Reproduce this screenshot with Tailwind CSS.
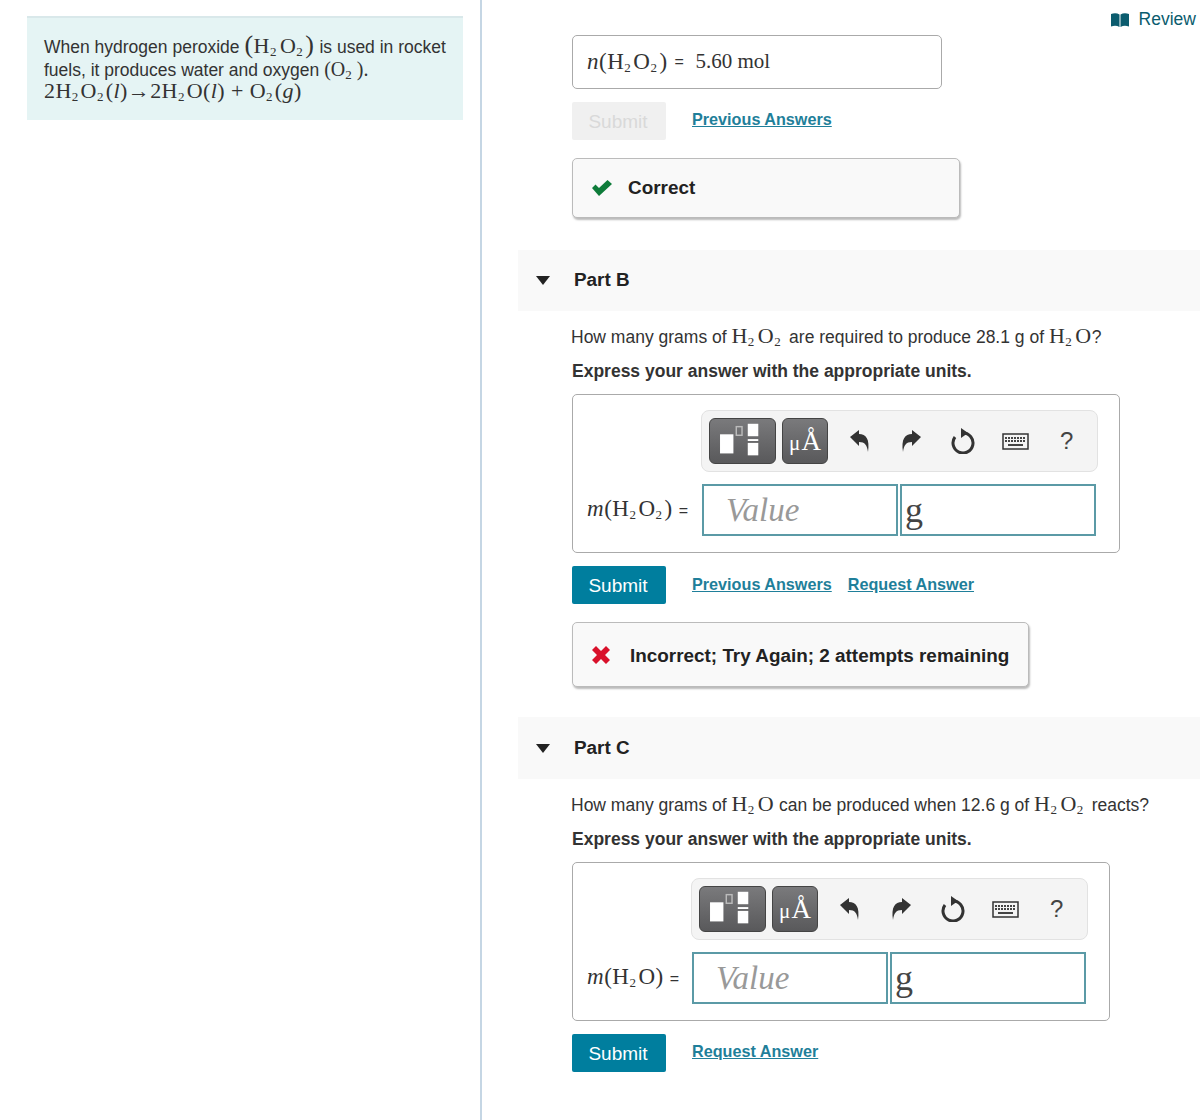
<!DOCTYPE html>
<html>
<head>
  <meta charset="UTF-8">
  <meta name="viewport" content="width=device-width, initial-scale=1.0">
  <script src="https://cdn.jsdelivr.net/npm/@tailwindcss/browser@4"></script>
</head>
<body class="bg-white font-['Liberation_Sans',sans-serif] text-[#333] overflow-hidden">
  <div class="flex w-[1200px] h-[1120px]">

    <!-- intro panel -->
    <div class="w-[482px] h-full shrink-0 border-r-2 border-[#c5d6e4] pt-4 pl-[27px]">
      <div class="w-[436px] h-[104px] bg-[#e5f4f4] border-t-2 border-[#d9e8ea] pt-[14px] pl-[17px] text-[17.500px] leading-[23px]">
        <p>When hydrogen peroxide <span class="font-['Liberation_Serif',serif] text-[22px] leading-none tracking-[0.5px]"><span class="text-[26px] font-light">(</span>H<sub class="text-[13px] mr-[3px]">2</sub>O<sub class="text-[13px] mr-[2px]">2</sub><span class="text-[26px] font-light">)</span></span> is used in rocket fuels, it produces water and oxygen <span class="font-['Liberation_Serif',serif] text-[20px] leading-none">(O<sub class="text-[13px]">2</sub> ).</span></p>
        <p class="-mt-px font-['Liberation_Serif',serif] text-[22px] leading-[20px] tracking-[0.4px]">2H<sub class="text-[13px] mr-[2px]">2</sub>O<sub class="text-[13px] mr-[2px]">2</sub>(<i>l</i>)→2H<sub class="text-[13px] mr-[2px]">2</sub>O(<i>l</i>) + O<sub class="text-[13px] mr-[2px]">2</sub>(<i>g</i>)</p>
      </div>
    </div>

    <!-- questions -->
    <div class="flex-1">
      <div class="h-[35px] flex items-start justify-end pt-[8px] pr-1 text-[17.500px] leading-[22px] text-[#0b5c6e]">
        <svg class="w-[18px] h-[14px] mt-[5px] mr-[10px]" viewBox="0 0 18 14" fill="#0b5c6e"><path d="M0 1c3-1 6-1 8.500.5V14c-2.500-1.500-5.500-1.500-8.500-.5zM9.500 1.500C12 0 15 0 18 1v12.500c-3-1-6-1-8.500.5z"/></svg>
        Review
      </div>

      <div class="pl-[90px]">
        <div class="w-[370px] h-[54px] border border-[#aaa] rounded-[5px] flex items-center pl-[14px] font-['Liberation_Serif',serif] text-[23px] tracking-[0.5px]">
          <span class="whitespace-nowrap"><i>n</i>(H<sub class="text-[13px] mr-[2px]">2</sub>O<sub class="text-[13px] mr-[2px]">2</sub>)</span>
          <span class="font-['Liberation_Sans',sans-serif] text-[16px] ml-[7px] mr-[11px]">=</span>
          <span class="text-[21px] tracking-normal">5.60 mol</span>
        </div>
        <div class="flex mt-[13px] items-start">
          <div class="w-[94px] h-[38px] bg-[#f0f0f0] rounded-[2px] flex items-center justify-center pt-[3px] pr-[2px] text-[19px] text-[#d9d9d9]">Submit</div>
          <a class="ml-[26px] mt-[6px] text-[16.200px] leading-[22px] font-bold text-[#1f7f9a] underline">Previous Answers</a>
        </div>
        <div class="w-[388px] h-[60px] mt-[18px] bg-[#f9f9f9] border border-[#bbb] rounded-[5px] shadow-[1px_2px_2px_#bbb] flex items-center pl-[19px] text-[18.900px] font-bold text-[#222]">
          <svg class="w-[20px] h-[16px] mr-[16px]" viewBox="0 0 20 16" fill="#0e7c3a"><path d="M0 8l3.500-3.500L7 8l8.500-8L20 4 7 16z"/></svg>
          Correct
        </div>
      </div>

      <!-- part B -->
      <div class="ml-[36px] mt-[32px] h-[61px] bg-[#f9f9f9] flex items-center pl-[18px] text-[18.900px] font-bold text-[#222]">
        <span class="w-0 h-0 mr-[24px] border-x-[7.500px] border-x-transparent border-t-[9px] border-t-[#222]"></span>
        Part B
      </div>
      <div class="pl-[90px]">
        <p class="mt-[12px] h-[26px] text-[17.500px] leading-[26px] -ml-px whitespace-nowrap">How many grams of <span class="font-['Liberation_Serif',serif] text-[22px] tracking-[0.5px]">H<sub class="text-[13px] mr-[3px]">2</sub>O<sub class="text-[13px] mr-[3px]">2</sub></span> are required to produce 28.1 g of <span class="font-['Liberation_Serif',serif] text-[22px] tracking-[0.5px]">H<sub class="text-[13px] mr-[3px]">2</sub>O</span>?</p>
        <p class="mt-[9px] h-[26px] text-[17.500px] leading-[26px] font-bold">Express your answer with the appropriate units.</p>
        <div class="w-[548px] h-[159px] mt-[10px] border border-[#aaa] rounded-[5px] pt-[15px]">
          <div class="ml-[128px] w-[397px] h-[62px] bg-[#f4f4f4] border border-[#e2e2e2] rounded-[8px] flex items-center pl-[7px]">
            <div class="w-[67px] h-[46px] bg-linear-to-b from-[#7a7a7c] to-[#59595b] border border-[#444] rounded-[6px]">
              <svg class="w-full h-full" viewBox="0 0 67 46" fill="#fff"><rect x="10" y="16" width="14" height="20"/><rect x="27" y="8" width="6" height="9" fill="none" stroke="#bbb" stroke-width="1.500"/><rect x="39" y="5" width="11" height="13"/><rect x="39" y="21" width="11" height="2"/><rect x="39" y="25" width="11" height="13"/></svg>
            </div>
            <div class="w-[46px] h-[46px] ml-[6px] bg-linear-to-b from-[#7a7a7c] to-[#59595b] border border-[#444] rounded-[6px] flex items-center justify-center font-['Liberation_Serif',serif] text-[27px] text-white"><span class="text-[21px] mt-[5px] mr-px">μ</span>Å</div>
            <svg class="w-[20px] h-[22px] ml-[22px]" viewBox="0 0 20 22" fill="#333"><path d="M0 7 9 0v4c7 0 11 5 9 18-1-7-3-10-9-10v4z"/></svg>
            <svg class="w-[20px] h-[22px] ml-[31px]" viewBox="0 0 20 22" fill="#333"><path d="M20 7 11 0v4C4 4 0 9 2 22c1-7 3-10 9-10v4z"/></svg>
            <svg class="w-[24px] h-[26px] ml-[30px]" viewBox="0 0 24 26" fill="none" stroke="#333" stroke-width="3"><path d="M12 5a10 10 0 1 1-8 4"/><path d="M10 0l7 5-7 5z" fill="#333" stroke="none"/></svg>
            <svg class="w-[27px] h-[17px] ml-[27px]" viewBox="0 0 27 17"><rect x="1" y="1" width="25" height="15" fill="#f4f4f4" stroke="#333" stroke-width="1.500"/><path d="M3 5h21M3 8h21" stroke="#444" stroke-width="2" stroke-dasharray="2 1"/><path d="M6 12h15" stroke="#444" stroke-width="2"/></svg>
            <span class="ml-[31px] text-[24px] text-[#444]">?</span>
          </div>
          <div class="flex items-center mt-[12px] pl-[14px]">
            <div class="w-[115px] -mt-[2px] font-['Liberation_Serif',serif] text-[23px] tracking-[0.5px] whitespace-nowrap"><i>m</i>(H<sub class="text-[13px] mr-[2px]">2</sub>O<sub class="text-[13px] mr-[2px]">2</sub>)<span class="font-['Liberation_Sans',sans-serif] text-[16px] ml-[6px]">=</span></div>
            <div class="w-[196px] h-[52px] border-2 border-[#5b9aa6] flex items-center pt-[2px] pl-[22px] font-['Liberation_Serif',serif] italic text-[33px] text-[#999]">Value</div>
            <div class="w-[196px] h-[52px] ml-[2px] border-2 border-[#5b9aa6] flex items-center pl-[3px] font-['Liberation_Serif',serif] text-[36px] text-[#444]">g</div>
          </div>
        </div>
        <div class="flex mt-[13px] items-start">
          <div class="w-[94px] h-[38px] bg-[#007e9e] rounded-[2px] flex items-center justify-center pt-[3px] pr-[2px] text-[19px] text-white">Submit</div>
          <a class="ml-[26px] mt-[7px] text-[16.200px] leading-[22px] font-bold text-[#1f7f9a] underline">Previous Answers</a>
          <a class="ml-[16px] mt-[7px] text-[16.200px] leading-[22px] font-bold text-[#1f7f9a] underline">Request Answer</a>
        </div>
        <div class="w-[457px] h-[65px] mt-[18px] bg-[#f9f9f9] border border-[#bbb] rounded-[5px] shadow-[1px_2px_2px_#bbb] flex items-center pl-[19px] pt-[4px] text-[18.900px] font-bold text-[#222]">
          <svg class="w-[18px] h-[18px] mr-[20px] -mt-[4px]" viewBox="0 0 18 18" fill="#d9112b"><path d="M0 4l4-4 5 5 5-5 4 4-5 5 5 5-4 4-5-5-5 5-4-4 5-5z"/></svg>
          Incorrect; Try Again; 2 attempts remaining
        </div>
      </div>

      <!-- part C -->
      <div class="ml-[36px] mt-[30px] h-[62px] bg-[#f9f9f9] flex items-center pl-[18px] text-[18.900px] font-bold text-[#222]">
        <span class="w-0 h-0 mr-[24px] border-x-[7.500px] border-x-transparent border-t-[9px] border-t-[#222]"></span>
        Part C
      </div>
      <div class="pl-[90px]">
        <p class="mt-[12px] h-[26px] text-[17.500px] leading-[26px] -ml-px whitespace-nowrap">How many grams of <span class="font-['Liberation_Serif',serif] text-[22px] tracking-[0.5px]">H<sub class="text-[13px] mr-[3px]">2</sub>O</span> can be produced when 12.6 g of <span class="font-['Liberation_Serif',serif] text-[22px] tracking-[0.5px]">H<sub class="text-[13px] mr-[3px]">2</sub>O<sub class="text-[13px] mr-[3px]">2</sub></span> reacts?</p>
        <p class="mt-[9px] h-[26px] text-[17.500px] leading-[26px] font-bold">Express your answer with the appropriate units.</p>
        <div class="w-[538px] h-[159px] mt-[10px] border border-[#aaa] rounded-[5px] pt-[15px]">
          <div class="ml-[118px] w-[397px] h-[62px] bg-[#f4f4f4] border border-[#e2e2e2] rounded-[8px] flex items-center pl-[7px]">
            <div class="w-[67px] h-[46px] bg-linear-to-b from-[#7a7a7c] to-[#59595b] border border-[#444] rounded-[6px]">
              <svg class="w-full h-full" viewBox="0 0 67 46" fill="#fff"><rect x="10" y="16" width="14" height="20"/><rect x="27" y="8" width="6" height="9" fill="none" stroke="#bbb" stroke-width="1.500"/><rect x="39" y="5" width="11" height="13"/><rect x="39" y="21" width="11" height="2"/><rect x="39" y="25" width="11" height="13"/></svg>
            </div>
            <div class="w-[46px] h-[46px] ml-[6px] bg-linear-to-b from-[#7a7a7c] to-[#59595b] border border-[#444] rounded-[6px] flex items-center justify-center font-['Liberation_Serif',serif] text-[27px] text-white"><span class="text-[21px] mt-[5px] mr-px">μ</span>Å</div>
            <svg class="w-[20px] h-[22px] ml-[22px]" viewBox="0 0 20 22" fill="#333"><path d="M0 7 9 0v4c7 0 11 5 9 18-1-7-3-10-9-10v4z"/></svg>
            <svg class="w-[20px] h-[22px] ml-[31px]" viewBox="0 0 20 22" fill="#333"><path d="M20 7 11 0v4C4 4 0 9 2 22c1-7 3-10 9-10v4z"/></svg>
            <svg class="w-[24px] h-[26px] ml-[30px]" viewBox="0 0 24 26" fill="none" stroke="#333" stroke-width="3"><path d="M12 5a10 10 0 1 1-8 4"/><path d="M10 0l7 5-7 5z" fill="#333" stroke="none"/></svg>
            <svg class="w-[27px] h-[17px] ml-[27px]" viewBox="0 0 27 17"><rect x="1" y="1" width="25" height="15" fill="#f4f4f4" stroke="#333" stroke-width="1.500"/><path d="M3 5h21M3 8h21" stroke="#444" stroke-width="2" stroke-dasharray="2 1"/><path d="M6 12h15" stroke="#444" stroke-width="2"/></svg>
            <span class="ml-[31px] text-[24px] text-[#444]">?</span>
          </div>
          <div class="flex items-center mt-[12px] pl-[14px]">
            <div class="w-[105px] -mt-[2px] font-['Liberation_Serif',serif] text-[23px] tracking-[0.5px] whitespace-nowrap"><i>m</i>(H<sub class="text-[13px] mr-[2px]">2</sub>O)<span class="font-['Liberation_Sans',sans-serif] text-[16px] ml-[6px]">=</span></div>
            <div class="w-[196px] h-[52px] border-2 border-[#5b9aa6] flex items-center pt-[2px] pl-[22px] font-['Liberation_Serif',serif] italic text-[33px] text-[#999]">Value</div>
            <div class="w-[196px] h-[52px] ml-[2px] border-2 border-[#5b9aa6] flex items-center pl-[3px] font-['Liberation_Serif',serif] text-[36px] text-[#444]">g</div>
          </div>
        </div>
        <div class="flex mt-[13px] items-start">
          <div class="w-[94px] h-[38px] bg-[#007e9e] rounded-[2px] flex items-center justify-center pt-[3px] pr-[2px] text-[19px] text-white">Submit</div>
          <a class="ml-[26px] mt-[6px] text-[16.200px] leading-[22px] font-bold text-[#1f7f9a] underline">Request Answer</a>
        </div>
      </div>
    </div>
  </div>
</body>
</html>
